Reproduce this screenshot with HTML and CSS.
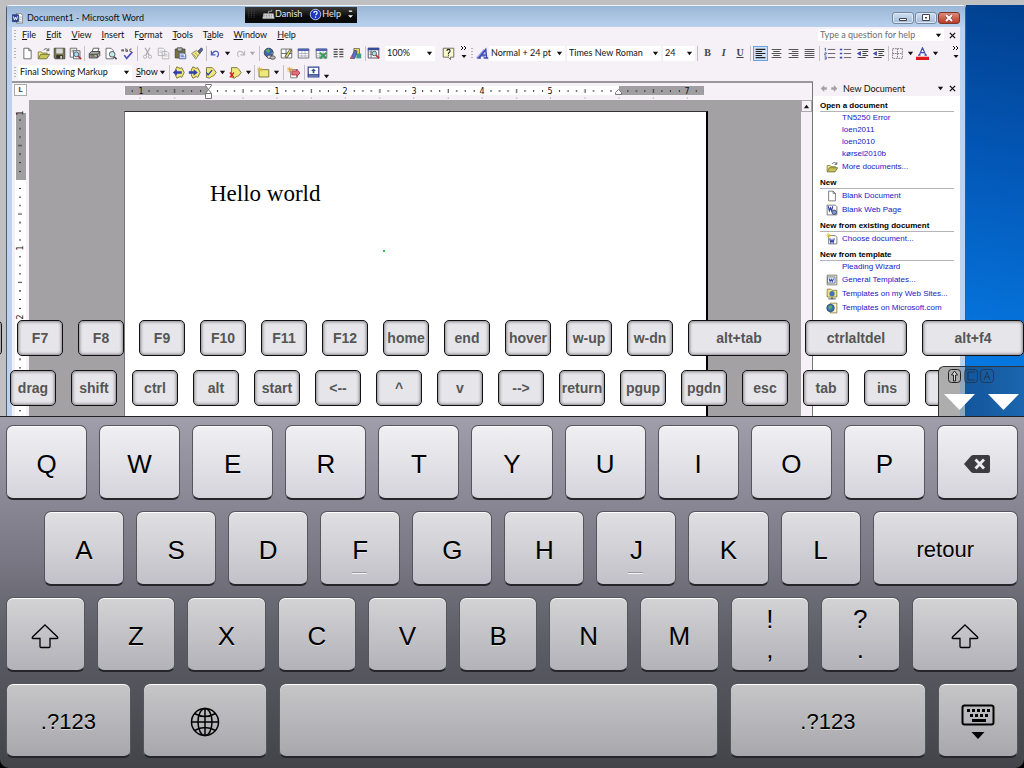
FILE: index.html
```html
<!DOCTYPE html>
<html lang="en">
<head>
<meta charset="utf-8">
<title>Document1 - Microsoft Word</title>
<link rel="stylesheet" href="styles.css">
</head>
<body>
<svg class="sprite" aria-hidden="true">
  <symbol id="new" viewBox="0 0 16 16"><path d="M3.5 1.5h6l3 3v10h-9z" fill="#fff" stroke="#555"/><path d="M9.500 1.500v3h3" fill="none" stroke="#555"/></symbol>
  <symbol id="open" viewBox="0 0 16 16"><path d="M1.500 14v-8h4l1 1.500h6V9" fill="#ece98c" stroke="#77732e"/><path d="M1.500 14.500l3-5.500h11l-3.500 5.500z" fill="#c8c45a" stroke="#66622a"/><path d="M8 4c2-3 5-2 6 0M14.500 1.500v3h-3" fill="none" stroke="#444"/></symbol>
  <symbol id="save" viewBox="0 0 16 16"><path d="M1.500 1.500h13v13h-12l-1-1z" fill="#77774a" stroke="#3c3c34"/><path d="M4 2h8v6H4z" fill="#d9d9dc"/><path d="M4 10h8v4H4z" fill="#333"/><path d="M9 11h2v3H9z" fill="#ddd"/></symbol>
  <symbol id="search" viewBox="0 0 16 16"><path d="M1.500 1.500h8v11h-8z" fill="#fff" stroke="#555"/><path d="M5.500 4.500h8v10h-8z" fill="#e7f3f4" stroke="#555"/><path d="M3 4h5M3 6h3" stroke="#777"/><circle cx="9" cy="9" r="3" fill="#9ee0e5" stroke="#447"/><path d="M11 11l4 4" stroke="#b33" stroke-width="2"/></symbol>
  <symbol id="print" viewBox="0 0 16 16"><path d="M5 6l1.500-4.500h7L12 6" fill="#fff" stroke="#444"/><path d="M1.500 8l3-2.500h10v5l-3 3h-10z" fill="#a9a9a6" stroke="#333"/><path d="M2 9h9.500v4M11.500 9l3-3M3 11h6" fill="none" stroke="#333"/><path d="M8 10.500h2" stroke="#dd3"/></symbol>
  <symbol id="preview" viewBox="0 0 16 16"><path d="M2.500 1.500h6l3 3v10h-9z" fill="#fff" stroke="#555"/><circle cx="10" cy="9" r="3.500" fill="#bfe6ea" stroke="#444"/><path d="M12.500 12l3 3" stroke="#444" stroke-width="2"/></symbol>
  <symbol id="spell" viewBox="0 0 16 16"><path d="M1 5.500V3.500q1-2 2 0v2M1 4.500h2M6 1.500v4h2v-2H6M13 2.500h-2v3h2" fill="none" stroke="#444"/><path d="M4 10l3 4 7-8" fill="none" stroke="#4d52bd" stroke-width="2"/></symbol>
  <symbol id="cut" viewBox="0 0 16 16"><path d="M5 1l5 9M11 1L6 10" stroke="#aaa" stroke-width="1.500"/><circle cx="5" cy="12" r="2" fill="none" stroke="#aaa"/><circle cx="11" cy="12" r="2" fill="none" stroke="#aaa"/></symbol>
  <symbol id="copy" viewBox="0 0 16 16"><path d="M1.500 1.500h6l2 2v7h-8zM6.500 5.500h6l2 2v7h-8z" fill="#f7f5f8" stroke="#aaa"/><path d="M3 5h4M3 7h3M8 9h5M8 11h5" stroke="#bbb"/></symbol>
  <symbol id="paste" viewBox="0 0 16 16"><path d="M1.500 2.500h12v11h-12z" fill="#77753e" stroke="#444"/><path d="M4 1h6v4H4z" fill="#bbb" stroke="#444"/><path d="M6.500 7.500h6l2 2v5h-8z" fill="#e8ecff" stroke="#44599d"/><path d="M8 10h4M8 12h5" stroke="#44599d"/></symbol>
  <symbol id="brush" viewBox="0 0 16 16"><path d="M2 8l6-4 4 4-5 7z" fill="#efe986" stroke="#777"/><path d="M4 9l4 4M6 7l4 4" stroke="#998f40"/><path d="M10 5l4-4 2 2-4 5z" fill="#5166a5" stroke="#444"/></symbol>
  <symbol id="undo" viewBox="0 0 16 16"><path d="M2 4v6h6M3 9c3-6 11-6 9 2l-2 2" fill="none" stroke="#4b5cc4" stroke-width="1.800"/></symbol>
  <symbol id="redo" viewBox="0 0 16 16"><path d="M14 4v6H8M13 9c-3-6-11-6-9 2l2 2" fill="none" stroke="#b9b7bb" stroke-width="1.500"/></symbol>
  <symbol id="globe" viewBox="0 0 16 16"><circle cx="7" cy="7" r="5.500" fill="#3d64ad" stroke="#335"/><path d="M3 4l4-2 2 3-3 3zM9 8l3-2v3z" fill="#55a96a"/><rect x="5" y="10" width="6" height="4" rx="2" fill="#ddd" stroke="#444"/><rect x="9" y="11" width="6" height="4" rx="2" fill="#bbb" stroke="#444"/></symbol>
  <symbol id="tables" viewBox="0 0 16 16"><path d="M1.500 2.500h13v11h-13zM1.500 8h13M7.500 2.500v11" fill="#fff" stroke="#555"/><path d="M6 12l6-9 2 1-5 9z" fill="#e7de67" stroke="#444"/></symbol>
  <symbol id="table" viewBox="0 0 16 16"><path d="M1.500 2.500h13v11h-13z" fill="#fff" stroke="#556"/><path d="M1 2h14v3H1z" fill="#4e62b4"/><path d="M2 8h12M2 11h12M6 5v8M10 5v8" stroke="#aab"/></symbol>
  <symbol id="excel" viewBox="0 0 16 16"><path d="M1.500 2.500h13v11h-13z" fill="#fff" stroke="#556"/><path d="M1 2h14v3H1z" fill="#4e62b4"/><path d="M2 8h12M2 11h12M6 5v8M10 5v8" stroke="#aab"/><path d="M6 7l8 7M14 7l-8 7" stroke="#3f995f" stroke-width="2.500"/></symbol>
  <symbol id="columns" viewBox="0 0 16 16"><path d="M2 3h5M2 6h5M2 9h5M2 12h5M9 3h5M9 6h5M9 9h5M9 12h5" stroke="#444" stroke-width="1.500"/></symbol>
  <symbol id="draw" viewBox="0 0 16 16"><rect x="6" y="2" width="7" height="7" fill="#e8d94d" stroke="#666"/><path d="M9 8h6v6H9z" fill="#399b8b"/><path d="M2 14L7 4l3 1-3 9z" fill="#5b6fd1" stroke="#447"/><path d="M1 14l2-4 2 4z" fill="#d55"/></symbol>
  <symbol id="docmap" viewBox="0 0 16 16"><path d="M1.500 1.500h13v12h-13z" fill="#fff" stroke="#335"/><path d="M1 1h14v3H1z" fill="#334c98"/><path d="M3 6h3M3 9h3M5 4v9" stroke="#556"/><circle cx="9" cy="8" r="2.800" fill="#a6e2e5" stroke="#444"/><path d="M11 10l4 4" stroke="#b33" stroke-width="2"/></symbol>
  <symbol id="help" viewBox="0 0 16 16"><path d="M1.500 1.500h13v11h-4v3l-3-3h-6z" fill="#fbf9c8" stroke="#555"/><path d="M6 5q0-2 2-2t2 2q0 1-2 2.500V9M8 10v1.500" fill="none" stroke="#223" stroke-width="1.400"/></symbol>
  <symbol id="style" viewBox="0 0 16 16"><path d="M1 14L9 5l1 9M4 11h6" fill="none" stroke="#98a5dd" stroke-width="2.500"/><path d="M4 13L12 3l1 10M7 10h6M2 13.500h4M10 13.500h5" fill="none" stroke="#3a48b5" stroke-width="1.800"/></symbol>
  <symbol id="left" viewBox="0 0 16 16"><path d="M2 3h12M2 5.500h8M2 8h12M2 10.500h8M2 13h12" stroke="#222" stroke-width="1.400"/></symbol>
  <symbol id="center" viewBox="0 0 16 16"><path d="M2 3h12M4 5.500h8M2 8h12M4 10.500h8M2 13h12" stroke="#555" stroke-width="1.300"/></symbol>
  <symbol id="right" viewBox="0 0 16 16"><path d="M2 3h12M6 5.500h8M2 8h12M6 10.500h8M2 13h12" stroke="#555" stroke-width="1.300"/></symbol>
  <symbol id="justify" viewBox="0 0 16 16"><path d="M2 3h12M2 5.500h12M2 8h12M2 10.500h12M2 13h12" stroke="#555" stroke-width="1.300"/></symbol>
  <symbol id="numbers" viewBox="0 0 16 16"><path d="M3 1v4M2 2h1M2 7h2v1.500H2V10h2M2 12h2v3H2M2 13.500h2" fill="none" stroke="#4656b0"/><path d="M6 3h9M6 8h9M6 13h9" stroke="#666" stroke-width="1.200"/></symbol>
  <symbol id="bullets" viewBox="0 0 16 16"><path d="M1 2h3v2H1zM1 7h3v2H1zM1 12h3v2H1z" fill="#3e4cad"/><path d="M6 3h9M6 8h9M6 13h9" stroke="#666" stroke-width="1.200"/></symbol>
  <symbol id="outdent" viewBox="0 0 16 16"><path d="M2 3h13M8 5.500h7M8 8h5M8 10.500h7M2 13h10" stroke="#444" stroke-width="1.300"/><path d="M6 5v6L1 8z" fill="#3e4cad"/></symbol>
  <symbol id="border" viewBox="0 0 16 16"><path d="M2 2h12v12H2zM8 2v12M2 8h12" fill="none" stroke="#666" stroke-dasharray="2 1"/></symbol>
  <symbol id="fontcolor" viewBox="0 0 16 16"><path d="M4 10L8 1l4 9M5.500 7h5M2.500 10h3M10.500 10h3" fill="none" stroke="#3f4ca8" stroke-width="1.500"/><path d="M0 12h16v4H0z" fill="#e21717"/></symbol>
  <symbol id="prev" viewBox="0 0 16 16"><path d="M6 1l4 2 2-1 3 6-3 6-2-1-4 2-2-4V5z" fill="#f0e979" stroke="#66612a"/><path d="M1 8l5-4v2.500h6v3H6V12z" fill="#2f3faf"/></symbol>
  <symbol id="next" viewBox="0 0 16 16"><path d="M6 1l4 2 2-1 3 6-3 6-2-1-4 2-2-4V5z" fill="#f0e979" stroke="#66612a"/><path d="M12 8L7 4v2.500H1v3h6V12z" fill="#2f3faf"/></symbol>
  <symbol id="accept" viewBox="0 0 16 16"><path d="M3 2h7l2 2 3 4-3 4-3 1-2 2-4-1z" fill="#f0e979" stroke="#66612a"/><path d="M3 8l2 3 5-6" fill="none" stroke="#2f3faf" stroke-width="1.600"/></symbol>
  <symbol id="reject" viewBox="0 0 16 16"><path d="M3 2h7l2 2 3 4-3 4-3 1-2 2-4-1z" fill="#f0e979" stroke="#66612a"/><path d="M1 8l5 6M6 8l-5 6" stroke="#c22" stroke-width="1.600"/></symbol>
  <symbol id="comment" viewBox="0 0 16 16"><path d="M2.500 4.500h12v9h-12z" fill="#eee978" stroke="#66612a"/><path d="M3 1v7M0 4h7M1 2l5 5M6 2L1 7" stroke="#dcb52a"/></symbol>
  <symbol id="track" viewBox="0 0 16 16"><path d="M4.500 4.500h8v10h-8z" fill="#fff" stroke="#666"/><path d="M6 6h6V4l4 4.500-4 4.500v-2H6z" fill="#e2707c" stroke="#a32a3a"/><path d="M3 1v7M0 4h7M1 2l5 5M6 2L1 7" stroke="#dca52a"/></symbol>
  <symbol id="reviewpane" viewBox="0 0 16 16"><path d="M1.500 1.500h13v12h-13z" fill="#fff" stroke="#324699" stroke-width="1.500"/><path d="M1 10h14v2H1z" fill="#324699"/><path d="M8 3l3 3H9v3H7V6H5z" fill="#324699"/></symbol>
  <symbol id="word" viewBox="0 0 16 16"><path d="M6.500 .5h6l3 3v11h-9z" fill="#fff" stroke="#555"/><path d="M10 6h4M10 9h4M10 12h4" stroke="#789"/><path d="M.5 2.500h9v10h-9z" fill="#2c47a3" stroke="#1d2f70"/><path d="M2 5l1.500 5L5 6l1.500 4L8 5" fill="none" stroke="#fff" stroke-width="1.300"/></symbol>
  <symbol id="webpage" viewBox="0 0 16 16"><path d="M1.500 1.500h11l2 2v11h-13z" fill="#fff" stroke="#556"/><path d="M3 3l1.500 6L6 5l1.500 4L9 3" fill="none" stroke="#3446a6" stroke-width="1.500"/><circle cx="11" cy="11" r="3" fill="#7b99d1" stroke="#335"/></symbol>
  <symbol id="choose" viewBox="0 0 16 16"><path d="M3.500 3.500h9l2 2v9h-11z" fill="#fff" stroke="#556"/><path d="M5 7l1.500 6L8 9l1.500 4L11 7" fill="none" stroke="#3446a6" stroke-width="1.400"/><path d="M3 0v7M0 3h7M1 1l5 5M6 1L1 6" stroke="#dcc52a"/></symbol>
  <symbol id="template" viewBox="0 0 16 16"><path d="M1.500 1.500h13v13h-13z" fill="#f1eab0" stroke="#667"/><path d="M2 4h10v8H2z" fill="#fff" stroke="#3e57b4"/><path d="M4 6l1.500 4L7 7l1.500 3L10 6" fill="none" stroke="#3446a6" stroke-width="1.400"/></symbol>
  <symbol id="website" viewBox="0 0 16 16"><path d="M1.500 3V1.500h5L8 3h6.500v9h-13z" fill="#f0e583" stroke="#776e28"/><circle cx="8" cy="7.500" r="3.500" fill="#4672b5"/><path d="M8 12v3M3 14.500h10" stroke="#222"/></symbol>
  <symbol id="mscom" viewBox="0 0 16 16"><path d="M5.500 1.500h9v13h-9z" fill="#f8f3ca" stroke="#776e28"/><circle cx="6" cy="8" r="5" fill="#3d72b5" stroke="#246"/><path d="M3 6l4-2 1 4-4 2z" fill="#5fb061"/></symbol>
  <symbol id="arrow" viewBox="0 0 8 8"><path d="M1 2h6L4 6z" fill="currentColor"/></symbol>
  <symbol id="close" viewBox="0 0 8 8"><path d="M1 1l6 6M7 1L1 7" stroke="currentColor" stroke-width="1.500"/></symbol>
  <symbol id="more" viewBox="0 0 8 14"><path d="M1 0l2 2-2 2M4 0l2 2-2 2" fill="none" stroke="#111"/><path d="M1.500 9h5L4 12z" fill="#111"/></symbol>
  <symbol id="shift" viewBox="0 0 28 26"><path d="M14 2L26.500 14Q27.500 15.500 26 15.500H19v8q0 1-1 1h-8q-1 0-1-1v-8H2Q.5 15.500 1.500 14z" fill="none" stroke="#000" stroke-width="1.300"/></symbol>
</svg>

<main class="screen">
  <div class="remote">
    <section class="window">
      <header class="titlebar">
        <svg class="icon sm"><use href="#word"/></svg>
        <h1>Document1 - Microsoft Word</h1>
        <div class="captions">
          <button aria-label="Minimize"><svg viewBox="0 0 20 10"><path d="M6.500 5.500h7v2h-7z" fill="#fff" stroke="#445"/></svg></button>
          <button aria-label="Restore"><svg viewBox="0 0 20 10"><path d="M6.500 1.500h7v6h-7z" fill="#fff" stroke="#445"/><path d="M9 4h2v1.500H9z" fill="#445"/></svg></button>
          <button class="shut" aria-label="Close"><svg viewBox="0 0 20 10"><path d="M7 2l6 6M13 2L7 8" stroke="#733" stroke-width="3"/><path d="M7 2l6 6M13 2L7 8" stroke="#fff" stroke-width="2"/></svg></button>
        </div>
        <div class="langbar">
          <svg class="dots" viewBox="0 0 8 12"><path d="M1 1v10M4 1v10M7 1v10" stroke="#555" stroke-dasharray="1 1"/></svg>
          <button><svg class="icon" viewBox="0 0 16 16"><path d="M2 7h12l1 6H1z" fill="#ddd" stroke="#999"/><path d="M3 9h10M3 11h10" stroke="#555" stroke-dasharray="1 1"/><path d="M8 7V4h4V2" fill="none" stroke="#aaa"/></svg>Danish</button>
          <button><svg class="icon" viewBox="0 0 16 16"><circle cx="8" cy="8" r="6.500" fill="#1d38c4" stroke="#dfe5ff"/><path d="M6 6q0-2 2-2t2 2q0 1-2 2.500M8 10.500V12" fill="none" stroke="#fff" stroke-width="1.500"/></svg>Help</button>
          <svg class="langmore" viewBox="0 0 6 12"><path d="M1 2h4" stroke="#fff" stroke-width="1.500"/><path d="M0 7h6L3 10z" fill="#fff"/></svg>
        </div>
      </header>

      <nav class="menubar">
        <i class="grip"></i>
        <div class="menus">
          <button><u>F</u>ile</button><button><u>E</u>dit</button><button><u>V</u>iew</button><button><u>I</u>nsert</button><button>F<u>o</u>rmat</button><button><u>T</u>ools</button><button>T<u>a</u>ble</button><button><u>W</u>indow</button><button><u>H</u>elp</button>
        </div>
        <label class="ask"><input type="text" placeholder="Type a question for help" aria-label="Type a question for help"><svg class="tiny"><use href="#arrow"/></svg></label>
        <button class="x" aria-label="Close document"><svg class="tiny"><use href="#close"/></svg></button>
      </nav>

      <div class="toolbar">
        <i class="grip"></i>
        <div class="group g4 first">
          <button aria-label="New"><svg class="icon"><use href="#new"/></svg></button><button aria-label="Open"><svg class="icon"><use href="#open"/></svg></button><button aria-label="Save"><svg class="icon"><use href="#save"/></svg></button><button aria-label="Search"><svg class="icon"><use href="#search"/></svg></button>
        </div>
        <div class="group g3">
          <button aria-label="Print"><svg class="icon"><use href="#print"/></svg></button><button aria-label="Preview"><svg class="icon"><use href="#preview"/></svg></button><button aria-label="Spelling"><svg class="icon"><use href="#spell"/></svg></button>
        </div>
        <div class="group g4">
          <button aria-label="Cut"><svg class="icon"><use href="#cut"/></svg></button><button aria-label="Copy"><svg class="icon"><use href="#copy"/></svg></button><button aria-label="Paste"><svg class="icon"><use href="#paste"/></svg></button><button aria-label="Format painter"><svg class="icon"><use href="#brush"/></svg></button>
        </div>
        <div class="group g3">
          <button aria-label="Undo"><svg class="icon sm"><use href="#undo"/></svg></button><svg class="tiny"><use href="#arrow"/></svg><button aria-label="Redo"><svg class="icon sm"><use href="#redo"/></svg></button><svg class="tiny dim"><use href="#arrow"/></svg>
        </div>
        <div class="group g6">
          <button aria-label="Hyperlink"><svg class="icon"><use href="#globe"/></svg></button><button aria-label="Tables and borders"><svg class="icon"><use href="#tables"/></svg></button><button aria-label="Insert table"><svg class="icon"><use href="#table"/></svg></button><button aria-label="Insert worksheet"><svg class="icon"><use href="#excel"/></svg></button><button aria-label="Columns"><svg class="icon"><use href="#columns"/></svg></button><button aria-label="Drawing"><svg class="icon"><use href="#draw"/></svg></button>
        </div>
        <div class="group zoom">
          <button aria-label="Document map"><svg class="icon"><use href="#docmap"/></svg></button>
          <label class="combo"><select aria-label="Zoom"><option>100%</option></select><svg class="tiny"><use href="#arrow"/></svg></label>
          <button aria-label="Word help"><svg class="icon"><use href="#help"/></svg></button>
          <svg class="more"><use href="#more"/></svg>
        </div>
        <i class="grip"></i>
        <button class="stylebtn" aria-label="Styles"><svg class="icon"><use href="#style"/></svg></button>
        <label class="combo c-style"><select aria-label="Style"><option>Normal + 24 pt</option></select><svg class="tiny"><use href="#arrow"/></svg></label>
        <label class="combo c-font"><select aria-label="Font"><option>Times New Roman</option></select><svg class="tiny"><use href="#arrow"/></svg></label>
        <label class="combo c-size"><select aria-label="Font size"><option>24</option></select><svg class="tiny"><use href="#arrow"/></svg></label>
        <div class="group g3 letters"><button><b>B</b></button><button><em>I</em></button><button><u>U</u></button></div>
        <div class="group g4">
          <button class="on" aria-label="Align left"><svg class="icon"><use href="#left"/></svg></button><button aria-label="Center"><svg class="icon"><use href="#center"/></svg></button><button aria-label="Align right"><svg class="icon"><use href="#right"/></svg></button><button aria-label="Justify"><svg class="icon"><use href="#justify"/></svg></button>
        </div>
        <div class="group g4">
          <button aria-label="Numbering"><svg class="icon"><use href="#numbers"/></svg></button><button aria-label="Bullets"><svg class="icon"><use href="#bullets"/></svg></button><button aria-label="Decrease indent"><svg class="icon"><use href="#outdent"/></svg></button><button aria-label="Increase indent"><svg class="icon"><use href="#outdent"/></svg></button>
        </div>
        <div class="group g3">
          <button aria-label="Border"><svg class="icon"><use href="#border"/></svg></button><svg class="tiny"><use href="#arrow"/></svg><button aria-label="Font color"><svg class="icon"><use href="#fontcolor"/></svg></button><svg class="tiny"><use href="#arrow"/></svg>
        </div>
        <svg class="more end"><use href="#more"/></svg>
      </div>

      <div class="toolbar review">
        <i class="grip"></i>
        <label class="combo c-markup"><select aria-label="Display for review"><option>Final Showing Markup</option></select><svg class="tiny"><use href="#arrow"/></svg></label>
        <button class="show"><span><u>S</u>how</span><svg class="tiny"><use href="#arrow"/></svg></button>
        <div class="group changes">
          <button aria-label="Previous"><svg class="icon"><use href="#prev"/></svg></button><button aria-label="Next"><svg class="icon"><use href="#next"/></svg></button><button aria-label="Accept"><svg class="icon"><use href="#accept"/></svg></button><svg class="tiny"><use href="#arrow"/></svg><button aria-label="Reject"><svg class="icon"><use href="#reject"/></svg></button><svg class="tiny"><use href="#arrow"/></svg>
        </div>
        <div class="group g2"><button aria-label="New comment"><svg class="icon"><use href="#comment"/></svg></button><svg class="tiny"><use href="#arrow"/></svg></div>
        <div class="group g1"><button aria-label="Track changes"><svg class="icon"><use href="#track"/></svg></button></div>
        <div class="group g2"><button aria-label="Reviewing pane"><svg class="icon"><use href="#reviewpane"/></svg></button><svg class="tiny low"><use href="#arrow"/></svg></div>
      </div>

      <div class="workspace">
        <div class="editor">
          <div class="ruler">
            <span class="corner">L</span>
            <svg class="hruler" width="700" height="17">
              <defs><pattern id="ht" x="85" width="68.400" height="17" patternUnits="userSpaceOnUse"><path d="M8.500 7v2M17 7v2M25.500 7v2M34 6v4M42.500 7v2M51 7v2M60 7v2" stroke="#333"/><path d="M34 14v2M68 14v2" stroke="#bbb"/></pattern></defs>
              <path d="M0 3h580v9H0z" fill="#fff"/><path d="M1 3h84v9H1zM495 3h85v9h-85z" fill="#a09ea0"/>
              <path d="M0 0h580v17H0z" fill="url(#ht)"/>
              <g class="nums"><text x="17" y="11">1</text><text x="153" y="11">1</text><text x="221" y="11">2</text><text x="290" y="11">3</text><text x="358" y="11">4</text><text x="426" y="11">5</text><text x="563" y="11">7</text></g>
              <path d="M81.500 1.500h6v1l-3 4 3 4v5h-6v-5l3-4-3-4zM81.500 10.500h6M491.500 11.500v-2l3-3 3 3v2z" fill="#fff" stroke="#777"/>
            </svg>
          </div>
          <div class="canvas">
            <svg class="vruler" width="17" height="330">
              <defs><pattern id="vt" y="80" width="17" height="68.400" patternUnits="userSpaceOnUse"><path d="M7 8.500h2M7 17h2M7 25.500h2M6 34h4M7 42.500h2M7 51h2M7 60h2" stroke="#333"/></pattern></defs>
              <path d="M3 13h11v317H3z" fill="#fff"/><path d="M4 13h10v67H4z" fill="#a09ea0"/><path d="M0 13h17v317H0z" fill="url(#vt)"/>
              <g class="nums"><text transform="translate(11 13) rotate(-90)">1</text><text transform="translate(11 148) rotate(-90)">1</text><text transform="translate(11 217) rotate(-90)">2</text></g>
            </svg>
            <article class="page"><p>Hello world</p><i class="spot"></i></article>
            <div class="scroll"><button aria-label="Scroll up"><svg class="tiny" viewBox="0 0 8 8"><path d="M1 6h6L4 2z" fill="#111"/></svg></button></div>
          </div>
        </div>

        <aside class="taskpane">
          <header><svg class="nav" viewBox="0 0 20 8"><path d="M0 4l4-4v2.500h3v3H4V8zM19 4l-4-4v2.500h-3v3h3V8z" fill="#a5a3a8"/></svg><h2>New Document</h2><svg class="tiny"><use href="#arrow"/></svg><button class="x" aria-label="Close pane"><svg class="tiny"><use href="#close"/></svg></button></header>
          <div class="panebody">
            <h3>Open a document</h3>
            <a href="#">TN5250 Error</a><a href="#">loen2011</a><a href="#">loen2010</a><a href="#">kørsel2010b</a>
            <a class="pic" href="#"><svg class="icon"><use href="#open"/></svg>More documents...</a>
            <h3>New</h3>
            <a class="pic" href="#"><svg class="icon"><use href="#new"/></svg>Blank Document</a>
            <a class="pic" href="#"><svg class="icon"><use href="#webpage"/></svg>Blank Web Page</a>
            <h3>New from existing document</h3>
            <a class="pic" href="#"><svg class="icon"><use href="#choose"/></svg>Choose document...</a>
            <h3>New from template</h3>
            <a href="#">Pleading Wizard</a>
            <a class="pic" href="#"><svg class="icon"><use href="#template"/></svg>General Templates...</a>
            <a class="pic" href="#"><svg class="icon"><use href="#website"/></svg>Templates on my Web Sites...</a>
            <a class="pic" href="#"><svg class="icon"><use href="#mscom"/></svg>Templates on Microsoft.com</a>
          </div>
        </aside>
      </div>
    </section>
    <div class="desktop"></div>
  </div>

  <div class="extras">
    <div class="strip upper">
      <button aria-label="F6"></button><button>F7</button><button>F8</button><button>F9</button><button>F10</button><button>F11</button><button>F12</button><button>home</button><button>end</button><button>hover</button><button>w-up</button><button>w-dn</button><button class="wide">alt+tab</button><button class="wide">ctrlaltdel</button><button class="wide">alt+f4</button>
    </div>
    <div class="strip lower">
      <button>drag</button><button>shift</button><button>ctrl</button><button>alt</button><button>start</button><button>&lt;--</button><button>^</button><button>v</button><button>--&gt;</button><button>return</button><button>pgup</button><button>pgdn</button><button>esc</button><button>tab</button><button>ins</button><button aria-label="del"></button>
    </div>
    <div class="toggles">
      <svg viewBox="0 0 86 50">
        <g fill="none" stroke="#222"><rect x="9.500" y="2.500" width="12" height="13" rx="3"/><rect x="25.500" y="2.500" width="13" height="13" rx="3" opacity=".55"/><rect x="41.500" y="2.500" width="13" height="13" rx="3" opacity=".55"/><path d="M14.500 14V8h-2l3-4 3 4h-2v6z" fill="#ddd"/><path d="M36 5h-7v8h7M45 13l3-8 3 8M46 10h4" opacity=".55"/></g>
        <path d="M5 27h31L20.500 43zM49 27h31L64.500 43z" fill="#fff"/>
      </svg>
    </div>
  </div>
</main>

<section class="keyboard">
  <div class="row r1"><button>Q</button><button>W</button><button>E</button><button>R</button><button>T</button><button>Y</button><button>U</button><button>I</button><button>O</button><button>P</button>
    <button aria-label="Delete"><svg class="k-del" viewBox="0 0 28 20"><path d="M1 10L8 2Q9 1 10.500 1H25q2 0 2 2v14q0 2-2 2H10.500Q9 19 8 18z" fill="#3c3c3e"/><path d="M12.500 5.500l8.500 9M21 5.500l-8.500 9" stroke="#ececf0" stroke-width="2.800"/></svg></button></div>
  <div class="row r2"><button>A</button><button>S</button><button>D</button><button class="home">F</button><button>G</button><button>H</button><button class="home">J</button><button>K</button><button>L</button><button class="word return">retour</button></div>
  <div class="row r3"><button aria-label="Shift"><svg class="k-shift"><use href="#shift"/></svg></button><button>Z</button><button>X</button><button>C</button><button>V</button><button>B</button><button>N</button><button>M</button><button class="dual"><span>!</span><span>,</span></button><button class="dual"><span>?</span><span>.</span></button><button class="shift2" aria-label="Shift"><svg class="k-shift"><use href="#shift"/></svg></button></div>
  <div class="row r4"><button class="word num">.?123</button>
    <button class="num" aria-label="Next keyboard"><svg class="k-globe" viewBox="0 0 30 30"><g fill="none" stroke="#000" stroke-width="1.500"><circle cx="15" cy="15" r="13.500"/><ellipse cx="15" cy="15" rx="7" ry="13.500"/><path d="M15 1.500v27M1.500 15h27M4.500 6.500q10.500 6 21 0M4.500 23.500q10.500-6 21 0"/></g></svg></button>
    <button class="space" aria-label="Space"></button><button class="word num2">.?123</button>
    <button class="hide" aria-label="Hide keyboard"><svg class="k-hide" viewBox="0 0 34 36"><rect x="1.500" y="1.500" width="31" height="19" rx="2" fill="none" stroke="#000" stroke-width="2"/><path d="M6 6.500h3M11 6.500h3M16 6.500h3M21 6.500h3M26 6.500h3M9 11.500h3M14 11.500h3M19 11.500h3M24 11.500h3M11 16.500h14" stroke="#000" stroke-width="2.800"/><path d="M10.500 28h13L17 35z"/></svg></button></div>
</section>
</body>
</html>
```

FILE: styles.css
```css
* { box-sizing: border-box; }
body {
  margin: 0;
  height: 100vh;
  display: flex;
  flex-direction: column;
  overflow: hidden;
  background: #000;
  font: 9px/12px Lato, "Noto Sans", sans-serif;
  color: #111;
}
button, select, input { font: inherit; color: inherit; border: 0; padding: 0; margin: 0; background: none; }
h1, h2, h3, p { margin: 0; font: inherit; }
svg { flex: none; display: block; }
.sprite { display: none; }
.icon { width: 13px; height: 13px; }
.icon.sm { width: 11px; height: 11px; }
.tiny { width: 7px; height: 7px; }
.dim { color: #aaa; }
.low { align-self: flex-end; }
.nums { font: 8px "DejaVu Sans", sans-serif; text-anchor: middle; fill: #111; }

/* Remote screen */
.screen { flex: 1; min-height: 0; position: relative; overflow: hidden; background: #c0bfc1; padding: 5px 0 0 6px; }
.remote { height: 100%; display: flex; }
.window {
  flex: 1;
  min-width: 0;
  display: flex;
  flex-direction: column;
  border: 1px solid #4b5a70;
  border-top-color: #eef4fb;
  border-bottom: 0;
  border-radius: 4px 4px 0 0;
  background: #bcd2ee;
  padding: 0 5px;
}
.desktop { width: 58px; background: linear-gradient(190deg, #01408f, #0355b3 35%, #0571d8 75%, #0880ea); }

.titlebar {
  position: relative;
  height: 21px;
  flex: none;
  margin: 0 -5px;
  padding: 3px 5px 0;
  display: flex;
  align-items: center;
  gap: 4px;
  background: linear-gradient(#9bb7d6, #b9d1ec);
}
.titlebar h1 { flex: 1; }
.captions { display: flex; gap: 1px; }
.captions button { width: 22px; height: 12px; border: 1px solid #7488a4; border-radius: 3px; background: linear-gradient(#cfdff0, #a4bbd7); display: flex; justify-content: center; align-items: center; box-shadow: inset 0 0 0 1px #dce8f5; }
.captions svg { width: 20px; height: 10px; }
.captions .shut { background: linear-gradient(#dd8a7b, #bd3a25); border-color: #7b3428; box-shadow: none; }
.langbar {
  position: absolute;
  left: 238px;
  top: 1px;
  height: 16px;
  display: flex;
  align-items: center;
  gap: 7px;
  padding: 0 4px 2px 3px;
  background: linear-gradient(#3a3a3a, #0a0a0a 60%);
  color: #e6e6e6;
}
.langbar button { display: flex; align-items: center; }
.dots { width: 7px; height: 12px; }
.langmore { width: 5px; height: 11px; }

.menubar, .toolbar { flex: none; display: flex; align-items: center; background: #f5f1f6; }
.menubar { height: 16px; }
.grip { flex: none; width: 2px; height: 11px; margin: 0 2px; background: repeating-linear-gradient(#b5b2b8 0 1px, transparent 1px 3px); }
.menus { flex: 1; display: flex; gap: 10px; padding-left: 4px; }
.menus u, .show u { text-underline-offset: 1px; }
.ask { width: 126px; height: 12px; display: flex; align-items: center; background: #fff; padding: 0 2px; }
.ask input { flex: 1; min-width: 0; height: 12px; outline: 0; }
.ask input::placeholder { color: #6e6c70; opacity: 1; }
.x { width: 16px; display: flex; justify-content: center; }

.toolbar { height: 20px; }
.toolbar button { display: flex; align-items: center; justify-content: center; }
.group { flex: none; height: 15px; display: flex; align-items: center; justify-content: space-around; border-left: 1px solid #c4c1c7; padding: 0 1px; }
.group.first { border: 0; }
.g1 { width: 21px; }
.g2 { width: 29px; }
.g3 { width: 53px; }
.g4 { width: 69px; }
.g6 { width: 106px; }
.first { width: 66px; }
.group.zoom { width: 104px; justify-content: space-between; }
.changes { width: 85px; }
.combo { flex: none; width: 50px; height: 15px; display: flex; align-items: center; background: #fff; padding: 0 2px; margin-right: 2px; }
.combo select { flex: 1; min-width: 0; appearance: none; outline: 0; height: 14px; }
.combo.c-style { width: 76px; }
.combo.c-font { width: 94px; }
.combo.c-size { width: 32px; }
.combo.c-markup { width: 114px; margin-right: 4px; }
.stylebtn { width: 14px; }
.more { width: 8px; height: 14px; }
.more.end { margin-left: auto; }
.letters { font: bold 10px/12px "Liberation Serif", serif; color: #444; }
.toolbar .on { background: #cfe2fa; outline: 1px solid #6ea0dc; }
.review { height: 18px; }
.show { gap: 1px; margin-right: 3px; }

/* Document area */
.workspace { flex: 1; min-height: 0; display: flex; }
.editor { flex: 1; min-width: 0; display: flex; flex-direction: column; border-top: 2px solid #99979c; border-right: 1px solid #77757a; background: #f5f1f6; }
.ruler { flex: none; height: 17px; display: flex; overflow: hidden; }
.corner { width: 13px; height: 12px; margin: 1px 97px 0 2px; border: 1px solid #aaa; background: #fff; font: bold 7px/10px "DejaVu Sans", sans-serif; text-align: center; color: #555; flex: none; }
.canvas { flex: 1; min-height: 0; display: flex; background: #a3a1a3; overflow: hidden; }
.vruler { background: #f5f1f6; margin-right: 95px; }
.page { flex: 1; margin-top: 11px; background: #fff; border-top: 1px solid #333; border-left: 1px solid #777; border-right: 2px solid #000; margin-right: 93px; padding: 69px 85px; font: 23px/26px "Liberation Serif", serif; color: #000; }
.spot { display: block; width: 2px; height: 2px; margin: 43px 0 0 173px; background: #3c4; }
.scroll { width: 11px; background: #f5f1f6; }
.scroll button { width: 11px; height: 12px; display: flex; align-items: center; justify-content: center; border: 1px solid #aaa; }

.taskpane { width: 147px; background: #fff; font: 8px/12px "Liberation Sans", sans-serif; }
.taskpane header { height: 15px; display: flex; align-items: center; background: #f5f1f6; padding-left: 7px; font: 9px/12px Lato, sans-serif; }
.taskpane h2 { flex: 1; margin-left: 4px; }
.nav { width: 19px; height: 7px; }
.panebody { padding: 1px 6px 0 7px; display: flex; flex-direction: column; }
.panebody h3 { font-weight: bold; color: #000; line-height: 11px; border-bottom: 1px solid #b5b3b8; margin-top: 3px; white-space: nowrap; }
.panebody a { color: #2020c8; text-decoration: none; padding-left: 22px; line-height: 12px; white-space: nowrap; }
.panebody .pic { display: flex; align-items: center; gap: 4px; padding-left: 6px; line-height: 14px; }
.pic .icon { width: 12px; height: 12px; }

/* Extra key strips that float over the remote screen */
.extras { position: absolute; inset: auto 0 0 0; height: 96px; overflow: hidden; font: bold 14px/18px "Liberation Sans", Arial, sans-serif; color: #555; }
.strip { display: flex; gap: 15px; margin-bottom: 14px; }
.upper { margin-left: -44px; }
.lower { margin-left: 10px; }
.strip button { flex: none; width: 46px; height: 36px; display: flex; align-items: center; justify-content: center; border: 1px solid #111; border-radius: 5px; background: #e6e5ea; box-shadow: inset 0 0 3px 1px #88878c; }
.strip .wide { width: 102px; }
.toggles { position: absolute; right: 0; bottom: 0; width: 86px; height: 50px; border: 1px solid #333; border-width: 1px 0 0 1px; border-radius: 6px 0 0 0; background: linear-gradient(90deg, #adadad 21px, #8fa7c0 21px 26px, #14569c 26px, #1a66ae); }
.toggles svg { width: 86px; height: 50px; }

/* Keyboard */
.keyboard { flex: none; display: flex; flex-direction: column; gap: 11px; padding: 8px 6px 10px; border-top: 1px solid #222; border-radius: 0 0 9px 9px; background: linear-gradient(#9f9eaa, #797884 40%, #5c5c64 65%, #43434a); font: 26px/30px "Liberation Sans", Helvetica, Arial, sans-serif; color: #000; }
.row { display: flex; gap: 12px; }
.row button { flex: 80 1 0; min-width: 0; height: 75px; display: flex; align-items: center; justify-content: center; position: relative; padding-top: 3px; border: 1px solid #55555c; border-bottom: 2px solid #25252a; border-radius: 7px; text-shadow: 0 1px 0 #fff8; box-shadow: inset 0 1px 0 #fff; }
.r1 button { background: linear-gradient(#f0f0f3, #d5d4dc); }
.r2 button { background: linear-gradient(#e0e0e3, #c2c1c9); }
.r3 button { background: linear-gradient(#d3d3d5, #b3b2b9); }
.r4 button { background: linear-gradient(#c6c6c8, #a8a7ad); }
.r2 { padding-left: 38px; }
.r2 .return { flex-grow: 147; }
.r3 .shift2 { flex-grow: 109; }
.r4 .num { flex-grow: 124; }
.r4 .space { flex-grow: 441; }
.r4 .num2 { flex-grow: 196; }
.r4 .hide { flex-grow: 79; }
.row .word { font-size: 22px; }
.home::after { content: ""; position: absolute; left: 50%; bottom: 11px; width: 15px; height: 1px; margin-left: -8px; background: #9a99a0; box-shadow: 0 1px 0 #f5f5f8; }
.row .dual { flex-direction: column; padding-top: 0; }
.k-del { width: 28px; height: 20px; }
.k-shift { width: 28px; height: 26px; }
.k-globe { width: 30px; height: 30px; }
.k-hide { width: 34px; height: 36px; }
```
